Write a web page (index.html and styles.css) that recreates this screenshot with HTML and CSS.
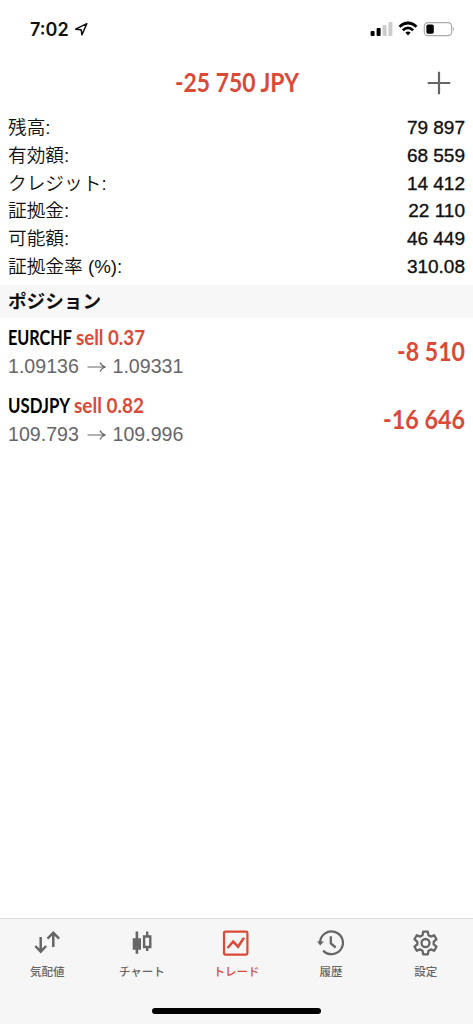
FILE: index.html
```html
<!DOCTYPE html>
<html lang="ja">
<head>
<meta charset="utf-8">
<title>トレード</title>
<link rel="stylesheet" href="styles.css">
</head>
<body>
<div class="app">
  <header class="status">
    <div class="clock"><span class="time">7:02</span>
      <svg width="15" height="15" viewBox="0 0 15 15"><path d="M1.6 7.2 12.8 1.7 7.9 12.9 7.2 7.8Z" fill="none" stroke="#111" stroke-width="1.5" stroke-linejoin="round"/></svg>
    </div>
    <svg class="indicators" width="86" height="18" viewBox="0 0 86 18">
      <rect x="0.6" y="11" width="4" height="5" rx="1"/><rect x="6.6" y="8" width="4" height="8" rx="1"/>
      <rect x="12.6" y="5" width="4" height="11" rx="1" fill="#ccc"/><rect x="18.4" y="2" width="4" height="14" rx="1" fill="#ccc"/>
      <g fill="none" stroke="#000" stroke-width="2.7"><path d="M29.5 6.8Q38 -.8 46.5 6.8"/><path d="M32.8 10.3Q38 5.6 43.2 10.3"/></g>
      <path d="M35.3 12.6Q38 10.6 40.7 12.6L38 15.6Z"/>
      <rect x="54.3" y="2.6" width="27.4" height="13" rx="3.8" fill="none" stroke="#aaa" stroke-width="1.2"/>
      <rect x="56.4" y="4.5" width="7.4" height="9.2" rx="1.7"/><path d="M83 7Q85 9 83 11Z" fill="#aaa"/>
    </svg>
  </header>
  <div class="titlebar">
    <svg class="cond red" width="126" height="38"><text x="1" y="25" font-size="27" textLength="124" lengthAdjust="spacingAndGlyphs">-25 750 JPY</text></svg>
    <svg class="plus" width="24" height="24" viewBox="0 0 24 24"><path d="M.7 12H23.3M12 .7V23.3" stroke="#666" stroke-width="2.2"/></svg>
  </div>
  <dl class="account">
    <div class="row"><dt>残高:</dt><dd>79 897</dd></div>
    <div class="row"><dt>有効額:</dt><dd>68 559</dd></div>
    <div class="row"><dt>クレジット:</dt><dd>14 412</dd></div>
    <div class="row"><dt>証拠金:</dt><dd>22 110</dd></div>
    <div class="row"><dt>可能額:</dt><dd>46 449</dd></div>
    <div class="row"><dt>証拠金率 (%):</dt><dd>310.08</dd></div>
  </dl>
  <h2 class="section">ポジション</h2>
  <ul class="positions">
    <li class="position">
      <div>
        <div class="deal"><svg class="cond" width="64" height="26"><text x="0" y="20" font-size="21" textLength="64" lengthAdjust="spacingAndGlyphs">EURCHF</text></svg><svg class="cond red" width="69" height="26"><text x="0" y="20" font-size="21" textLength="69" lengthAdjust="spacingAndGlyphs">sell 0.37</text></svg></div>
        <div class="prices"><span>1.09136</span><svg width="20" height="12" viewBox="0 0 20 12"><path d="M.5 6H18M13 1.5Q14.5 5 18.5 6Q14.5 7 13 10.5" fill="none" stroke="#66666a" stroke-width="1.2"/></svg><span>1.09331</span></div>
      </div>
      <svg class="cond red" width="68" height="38"><text x="0" y="25" font-size="27" textLength="68" lengthAdjust="spacingAndGlyphs">-8 510</text></svg>
    </li>
    <li class="position">
      <div>
        <div class="deal"><svg class="cond" width="62" height="26"><text x="0" y="20" font-size="21" textLength="62" lengthAdjust="spacingAndGlyphs">USDJPY</text></svg><svg class="cond red" width="70" height="26"><text x="0" y="20" font-size="21" textLength="70" lengthAdjust="spacingAndGlyphs">sell 0.82</text></svg></div>
        <div class="prices"><span>109.793</span><svg width="20" height="12" viewBox="0 0 20 12"><path d="M.5 6H18M13 1.5Q14.5 5 18.5 6Q14.5 7 13 10.5" fill="none" stroke="#66666a" stroke-width="1.2"/></svg><span>109.996</span></div>
      </div>
      <svg class="cond red" width="82" height="38"><text x="0" y="25" font-size="27" textLength="82" lengthAdjust="spacingAndGlyphs">-16 646</text></svg>
    </li>
  </ul>
  <nav class="tabs">
    <a class="tab"><svg width="28" height="28" viewBox="0 0 28 28"><path d="M7.7 8V22.5M2.3 17 7.7 22.7 13.1 17M20.3 18V4M14.5 9.7 20.3 3.7 26.1 9.7" fill="none" stroke="currentColor" stroke-width="2.5"/></svg><span>気配値</span></a>
    <a class="tab"><svg width="28" height="28" viewBox="0 0 28 28"><path d="M4.7 9.3H7.6V2.5H10.2V9.3H13V20.8H10.2V24.7H7.6V20.8H4.7Z" fill="currentColor"/><path d="M16.1 7.5H22.3V18H16.1ZM19.2 2.5V7.5M19.2 18V22" fill="none" stroke="currentColor" stroke-width="2.4"/></svg><span>チャート</span></a>
    <a class="tab active"><svg width="28" height="28" viewBox="0 0 28 28"><rect x="2" y="2.6" width="23.4" height="23" rx="1.3" fill="none" stroke="currentColor" stroke-width="2.2"/><path d="M5.5 19 11.2 12.7 16 17.7 22 8.7" fill="none" stroke="currentColor" stroke-width="2.5"/></svg><span>トレード</span></a>
    <a class="tab"><svg width="28" height="28" viewBox="0 0 28 28"><path d="M3.1 13.5A11.4 11.4 0 1 1 6.2 21.6M13.8 7.3V14.4L18.7 18.5" fill="none" stroke="currentColor" stroke-width="2.3"/><path d="M0 12.6H6.9L3.2 16.6Z" fill="currentColor"/></svg><span>履歴</span></a>
    <a class="tab"><svg width="28" height="28" viewBox="0 0 28 28"><g transform="translate(-.5 0)" fill="none" stroke="currentColor" stroke-width="2.3" stroke-linejoin="round"><path d="M11.7 2.7H16.3L17 6.3 19.2 7.6 22.7 6.3 25 10.3 22.2 12.7V15.3L25 17.7 22.7 21.7 19.2 20.4 17 21.7 16.3 25.3H11.7L11 21.7 8.8 20.4 5.3 21.7 3 17.7 5.8 15.3V12.7L3 10.3 5.3 6.3 8.8 7.6 11 6.3Z"/><circle cx="14" cy="14" r="4"/></g></svg><span>設定</span></a>
    <div class="home"></div>
  </nav>
</div>
</body>
</html>
```
FILE: styles.css
```css
* { box-sizing: border-box; }
body, dl, dd, ul, h2 { margin: 0; padding: 0; }
body { background: #fff; color: #111; font-family: "Liberation Sans", "Noto Sans CJK JP", sans-serif; }
svg { display: block; flex: none; overflow: visible; }
.app { width: 473px; height: 1024px; display: flex; flex-direction: column; overflow: hidden; }
.status { height: 58px; padding: 0 17px 0 30px; display: flex; align-items: center; justify-content: space-between; }
.clock { display: flex; align-items: center; gap: 5px; padding-top: 1px; }
.time { font: 600 18px/24px Inter, sans-serif; }
.titlebar { height: 56px; padding: 9px 22px 0 174px; display: flex; justify-content: space-between; }
.plus { margin-top: 4px; }
.cond { font-family: Lato, sans-serif; font-weight: 700; fill: #000; }
.cond.red { fill: #d94b38; }
.account { height: 171px; padding: 0 8px; }
.row { height: 27.75px; display: flex; justify-content: space-between; line-height: 27.75px; }
dt { font-family: "Liberation Sans", "Noto Sans CJK JP", sans-serif; font-weight: 350; font-size: 18.7px; }
dd { font-size: 19px; -webkit-text-stroke: .35px #111; }
.section { height: 33px; padding-left: 8px; background: #f7f7f7; font: 700 18.6px/29px "Noto Sans CJK JP", sans-serif; }
.positions { flex: 1; padding: 7px 8px 0; list-style: none; }
.position { height: 68px; display: flex; justify-content: space-between; }
.position > svg { margin-top: 11px; }
.deal { display: flex; gap: 4px; }
.prices { height: 31px; display: flex; align-items: center; gap: 6px; color: #66666a; font-size: 19.6px; }
.prices span { width: 72.5px; }
.tabs { height: 106px; border-top: 1px solid #dcdcdc; background: #f6f6f6; display: grid; grid-template-columns: repeat(5, 1fr); grid-template-rows: 91px 6px; }
.tab { padding-top: 10px; display: flex; flex-direction: column; align-items: center; color: #666; font: 500 11.5px/17px "Noto Sans CJK JP", sans-serif; gap: 6px; }
.active { color: #d94b38; }
.home { grid-column: 1 / -1; justify-self: center; width: 169px; height: 6px; border-radius: 3px; background: #000; margin-top: -2px; }
```
